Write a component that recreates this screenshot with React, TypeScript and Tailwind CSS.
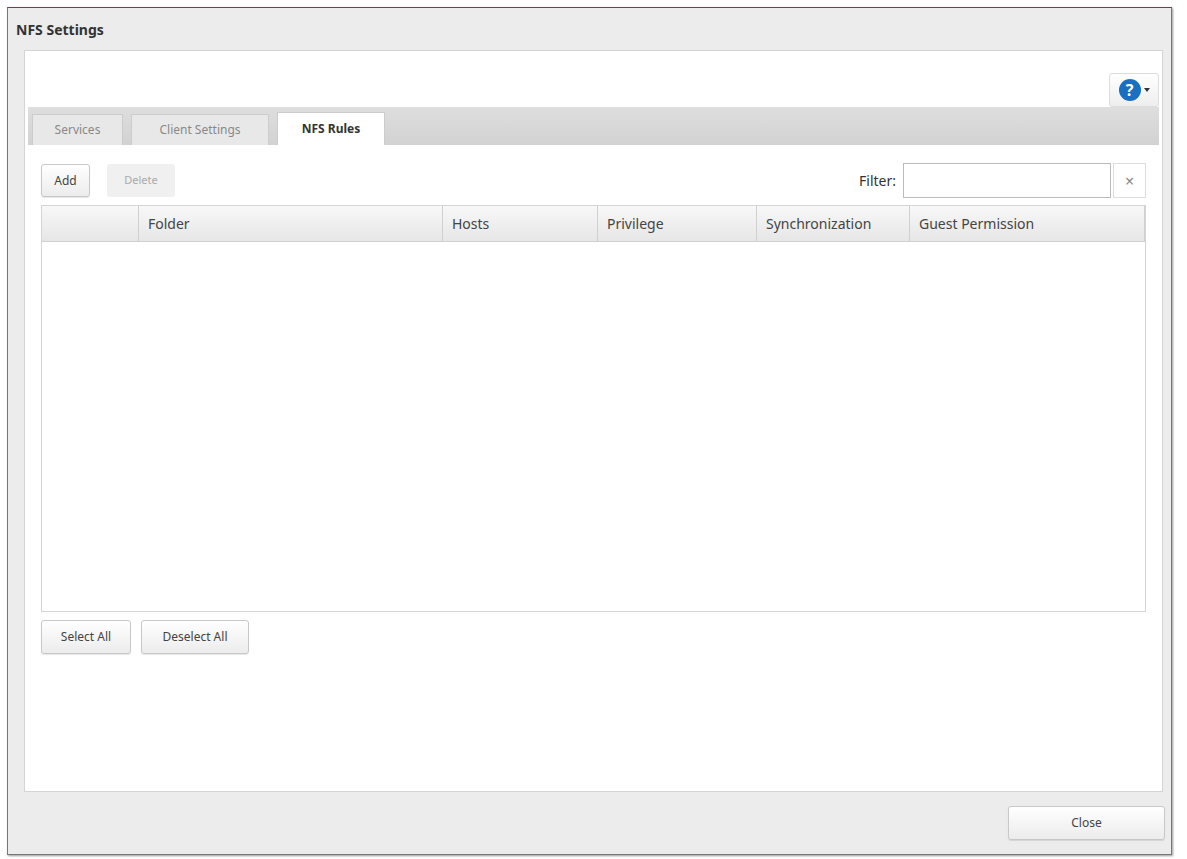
export default function App() {
  const btn = "border border-[#c8c8c8] rounded-[3px] bg-gradient-to-b from-white to-[#ececec] text-[12px] text-[#444] flex items-center justify-center shadow-[0_1px_1px_rgba(0,0,0,0.1)]";
  const cols = [
    { w: "w-[97px]", t: "" },
    { w: "w-[304px]", t: "Folder" },
    { w: "w-[155px]", t: "Hosts" },
    { w: "w-[159px]", t: "Privilege" },
    { w: "w-[153px]", t: "Synchronization" },
    { w: "flex-1", t: "Guest Permission" },
  ];
  return (
    <div className="w-[1187px] h-[859px] bg-white p-[7px_15px_4px_7px]" style={{ fontFamily: '"Noto Sans", "Open Sans", sans-serif' }}>
      <div className="w-full h-full border border-[#777] border-t-[#6b4050] bg-[#ececec] flex flex-col shadow-[1px_1px_2px_rgba(0,0,0,0.4)]">
        <div className="h-[42px] flex items-center px-[8px] text-[14px] font-bold text-[#333]">NFS Settings</div>
        <div className="ml-[16px] mr-[8px] flex-1 bg-white border border-[#d4d4d4] flex flex-col px-[3px] pt-[28px]">
          <div className="flex justify-end">
            <div className="w-[50px] h-[34px] mt-[-6px] border border-[#ddd] rounded-[3px] bg-gradient-to-b from-white to-[#eee] flex items-center justify-center gap-[3px]">
              <div className="w-[22px] h-[22px] rounded-full bg-[#1a6fc0] text-white text-[16px] font-bold flex items-center justify-center leading-none">?</div>
              <div className="w-0 h-0 border-l-[3px] border-r-[3px] border-t-[4px] border-l-transparent border-r-transparent border-t-[#333]" />
            </div>
          </div>
          <div className="mt-0 h-[38px] bg-gradient-to-b from-[#dedede] to-[#d2d2d2] flex items-end gap-[8px] px-[4px]">
            <div className="w-[91px] h-[31px] bg-[#e8e8e8] border border-[#ccc] border-b-0 flex items-center justify-center text-[12px] text-[#888]">Services</div>
            <div className="w-[138px] h-[31px] bg-[#e8e8e8] border border-[#ccc] border-b-0 flex items-center justify-center text-[12px] text-[#888]">Client Settings</div>
            <div className="w-[108px] h-[33px] bg-white border border-[#ccc] border-b-0 flex items-center justify-center text-[12px] font-bold text-[#333]">NFS Rules</div>
          </div>
          <div className="flex-1 flex flex-col px-[13px] pt-[18px] pb-[8px]">
            <div className="flex items-center h-[35px]">
              <div className={btn + " w-[49px] h-[33px]"}>Add</div>
              <div className="ml-[17px] w-[68px] h-[33px] rounded-[3px] bg-[#f0f0f0] text-[11px] text-[#aaa] flex items-center justify-center">Delete</div>
              <div className="flex-1" />
              <span className="text-[14px] text-[#333] mr-[7px]">Filter:</span>
              <div className="w-[208px] h-[35px] border border-[#bbb] bg-white" />
              <div className="ml-[2px] w-[33px] h-[35px] border border-[#ddd] flex items-center justify-center text-[#888] text-[16px]">×</div>
            </div>
            <div className="mt-[7px] h-[407px] border border-[#d4d4d4] flex flex-col">
              <div className="h-[36px] flex bg-gradient-to-b from-[#f8f8f8] to-[#e6e6e6] border-b border-[#d0d0d0]">
                {cols.map((c, i) => (
                  <div key={i} className={c.w + " h-full flex items-center px-[9px] text-[14px] text-[#444] border-r border-[#d0d0d0]"}>{c.t}</div>
                ))}
              </div>
              <div className="flex-1 bg-white" />
            </div>
            <div className="flex gap-[10px] mt-[8px]">
              <div className={btn + " w-[90px] h-[34px]"}>Select All</div>
              <div className={btn + " w-[108px] h-[34px]"}>Deselect All</div>
            </div>
          </div>
        </div>
        <div className="h-[62px] flex items-center justify-end pr-[6px]">
          <div className={btn + " w-[157px] h-[34px]"}>Close</div>
        </div>
      </div>
    </div>
  );
}
